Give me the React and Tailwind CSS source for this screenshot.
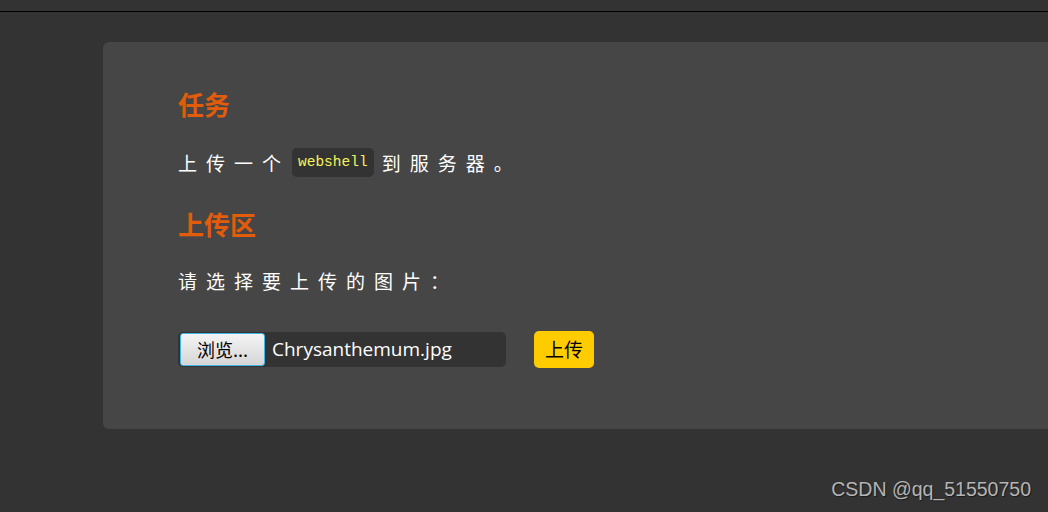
export default function App() {
    const cjk = { fontFamily: '"Noto Sans CJK SC", "Noto Sans", sans-serif' };

    return (
        <div className="relative h-[512px] w-full overflow-hidden bg-[#333333]" style={cjk}>
            <div className="h-[11px]" />
            <div className="h-px bg-black" />

            <div className="flex pt-[30px] pl-[103px]">
                <section className="h-[387px] flex-1 rounded-l-[6px] bg-[#464646] pl-[75px] pt-[46px]">
                    <h2 className="text-[26px] font-bold leading-[32px] text-[#e25c0a]">任务</h2>

                    <p className="mt-[28px] flex items-center text-[19px] leading-[28px] tracking-[9px] text-white">
                        <span>上传一个</span>
                        <code className="ml-[2px] mr-[8px] rounded-[5px] bg-[#333333] px-[6px] py-[5px] font-['Liberation_Mono',monospace] text-[14.5px] leading-[19px] tracking-normal text-[#f5f55c]">
                            webshell
                        </code>
                        <span>到服务器。</span>
                    </p>

                    <h2 className="mt-[31px] text-[26px] font-bold leading-[32px] text-[#e25c0a]">上传区</h2>

                    <p className="mt-[27px] text-[19px] leading-[28px] tracking-[9px] text-white">请选择要上传的图片：</p>

                    <div className="mt-[36px] flex items-center">
                        <div className="flex h-[35px] w-[328px] items-center rounded-[5px] bg-[#333333] pl-[2px]">
                            <div className="flex h-[33px] w-[85px] items-center justify-center rounded-[3px] border border-[#3fb6e4] bg-gradient-to-b from-[#f4f4f4] to-[#d6d6d6] text-[18px] text-black">
                                浏览...
                            </div>
                            <span className="ml-[7px] font-['Open_Sans',sans-serif] text-[19px] text-white">Chrysanthemum.jpg</span>
                        </div>
                        <button className="ml-[28px] h-[37px] w-[60px] rounded-[5px] bg-[#ffcc00] text-[19px] text-black">上传</button>
                    </div>
                </section>
            </div>

            <div className="absolute right-[17px] bottom-[8px] font-['Liberation_Sans',sans-serif] text-[19.5px] text-[#b4b4b4] [text-shadow:1px_1px_1px_rgba(0,0,0,0.5)]">
                CSDN @qq_51550750
            </div>
        </div>
    );
}
